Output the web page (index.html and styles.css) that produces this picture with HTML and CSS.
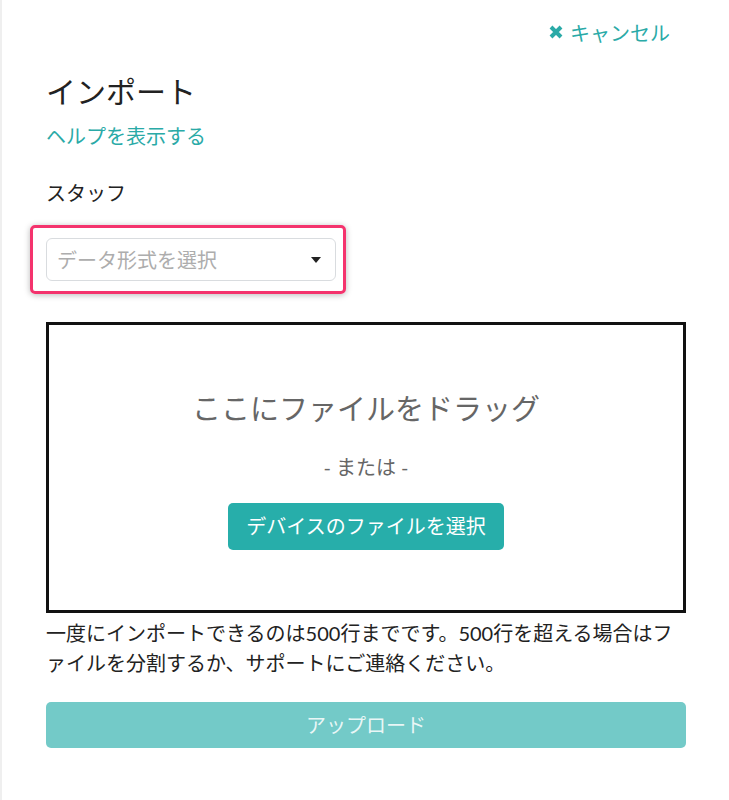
FILE: index.html
```html
<!DOCTYPE html>
<html lang="ja">
<head>
<meta charset="utf-8">
<title>インポート</title>
<link rel="stylesheet" href="styles.css">
</head>
<body>
<div class="panel">
  <div class="topbar">
    <a class="cancel" href="#">
      <svg class="cancel-icon" viewBox="0 0 14 14" width="14" height="14" aria-hidden="true">
        <path d="M2 2 L12 12 M12 2 L2 12" stroke="currentColor" stroke-width="4" fill="none"/>
      </svg>
      <span>キャンセル</span>
    </a>
  </div>
  <h1 class="title">インポート</h1>
  <a class="help" href="#">ヘルプを表示する</a>
  <div class="label">スタッフ</div>
  <div class="highlight">
    <div class="select">
      <span class="placeholder">データ形式を選択</span>
      <span class="caret"></span>
    </div>
  </div>
  <div class="dropzone">
    <div class="drag-text">ここにファイルをドラッグ</div>
    <div class="or">- または -</div>
    <button class="btn-device" type="button">デバイスのファイルを選択</button>
  </div>
  <p class="note">一度にインポートできるのは500行までです。500行を超える場合はファイルを分割するか、サポートにご連絡ください。</p>
  <button class="btn-upload" type="button">アップロード</button>
</div>
</body>
</html>
```

FILE: styles.css
```css
html, body {
  margin: 0;
  padding: 0;
  background: #fff;
}
body {
  font-family: Lato, "Noto Sans CJK JP", sans-serif;
  color: #222;
  font-size: 20px;
  line-height: 30px;
}
.panel {
  border-left: 2px solid #efefef;
  min-height: 800px;
  box-sizing: border-box;
  padding: 18px 43px 0 44px;
}
.topbar {
  display: flex;
  justify-content: flex-end;
  padding-right: 16px;
}
.cancel {
  display: flex;
  align-items: center;
  gap: 7px;
  color: #2aaaa7;
  text-decoration: none;
  font-size: 20px;
  line-height: 30px;
}
.cancel-icon {
  display: block;
  margin-top: -3px;
}
.title {
  margin: 25px 0 0 0;
  font-size: 30px;
  line-height: 36px;
  font-weight: 400;
  color: #222;
}
.help {
  display: block;
  margin-top: 12px;
  color: #2aaaa7;
  text-decoration: none;
}
.label {
  margin-top: 27px;
  color: #222;
}
.highlight {
  margin: 17px 0 0 -16px;
  width: 316px;
  box-sizing: border-box;
  border: 3px solid #f4336d;
  border-radius: 5px;
  padding: 10px 7px 10px 13px;
  box-shadow: 0 1px 6px rgba(0, 0, 0, 0.28);
}
.select {
  height: 43px;
  box-sizing: border-box;
  border: 1px solid #d9dcdf;
  border-radius: 6px;
  display: flex;
  align-items: center;
  justify-content: space-between;
  padding: 0 14px 0 10px;
  background: #fff;
}
.placeholder {
  color: #adadad;
}
.caret {
  width: 0;
  height: 0;
  border-left: 5px solid transparent;
  border-right: 5px solid transparent;
  border-top: 6px solid #222;
}
.dropzone {
  margin-top: 28px;
  height: 291px;
  box-sizing: border-box;
  border: 3px solid #111;
  display: flex;
  flex-direction: column;
  align-items: center;
  justify-content: center;
}
.drag-text {
  font-size: 29px;
  line-height: 45px;
  color: #666;
}
.or {
  margin-top: 21px;
  color: #666;
}
.btn-device {
  margin-top: 21px;
  font-family: inherit;
  font-size: 20px;
  line-height: 31px;
  padding: 8px 18px;
  border: 0;
  border-radius: 5px;
  background: #27aeaa;
  color: #fff;
}
.note {
  margin: 5px 0 0 0;
  color: #222;
}
.btn-upload {
  display: block;
  width: 100%;
  margin-top: 24px;
  height: 46px;
  font-family: inherit;
  font-size: 20px;
  line-height: 30px;
  border: 0;
  border-radius: 5px;
  background: #73cac8;
  color: rgba(255, 255, 255, 0.85);
}
```
